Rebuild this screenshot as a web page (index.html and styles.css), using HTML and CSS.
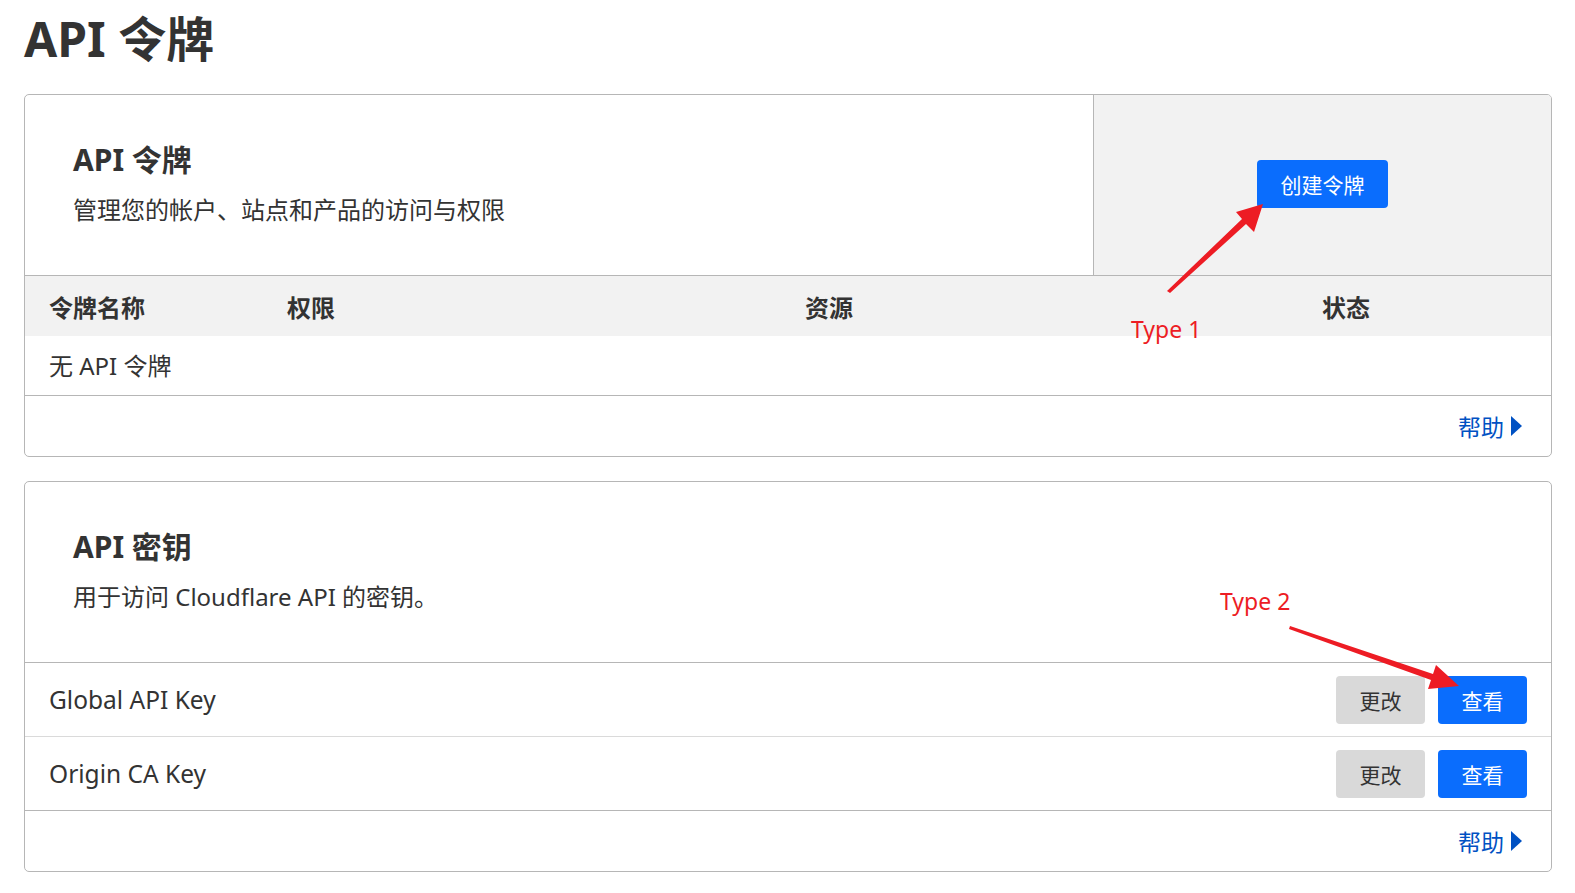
FILE: index.html
```html
<!DOCTYPE html>
<html lang="zh-CN">
    <head>
        <meta charset="UTF-8">
        <meta name="viewport" content="width=device-width, initial-scale=1.0">
        <title>API 令牌</title>
        <link rel="stylesheet" href="styles.css">
    </head>
    <body>
        <div class="page">

            <h1 class="page-title">API 令牌</h1>

            <!-- tokens -->
            <div class="card">
                <div class="card-top">
                    <div class="card-intro">
                        <p class="card-title">API 令牌</p>
                        <p class="card-desc">管理您的帐户、站点和产品的访问与权限</p>
                    </div>
                    <div class="card-side">
                        <button class="btn btn-blue btn-create">创建令牌</button>
                    </div>
                </div>

                <div class="token-head">
                    <span>令牌名称</span>
                    <span>权限</span>
                    <span>资源</span>
                    <span>状态</span>
                </div>
                <div class="token-empty">无 API 令牌</div>

                <div class="card-foot">
                    <a class="help-link" href="#">帮助
                        <svg class="help-arrow" width="11" height="20" viewBox="0 0 11 20"><polygon points="0,0 11,10 0,20" fill="#0051c3"/></svg>
                    </a>
                </div>
            </div>

            <!-- keys -->
            <div class="card">
                <div class="card-top">
                    <div class="card-intro">
                        <p class="card-title">API 密钥</p>
                        <p class="card-desc">用于访问 Cloudflare API 的密钥。</p>
                    </div>
                </div>

                <div class="key-row">
                    <span class="key-name">Global API Key</span>
                    <div class="key-actions">
                        <button class="btn btn-gray">更改</button>
                        <button class="btn btn-blue">查看</button>
                    </div>
                </div>
                <div class="key-row key-row-last">
                    <span class="key-name">Origin CA Key</span>
                    <div class="key-actions">
                        <button class="btn btn-gray">更改</button>
                        <button class="btn btn-blue">查看</button>
                    </div>
                </div>

                <div class="card-foot">
                    <a class="help-link" href="#">帮助
                        <svg class="help-arrow" width="11" height="20" viewBox="0 0 11 20"><polygon points="0,0 11,10 0,20" fill="#0051c3"/></svg>
                    </a>
                </div>
            </div>

        </div>

        <!-- annotations drawn over the screenshot -->
        <svg class="marks" width="1500" height="800" viewBox="0 0 1500 800">
            <polygon fill="#ed1c24" points="1167,291 1242,219 1236,212 1263,204 1254,232 1246,224 1170,293"/>
            <polygon fill="#ed1c24" points="1290,626 1433,674 1436,665 1459,686 1428,689 1431,680 1289,629"/>
        </svg>
        <span class="mark-label mark-one">Type 1</span>
        <span class="mark-label mark-two">Type 2</span>
    </body>
</html>
```

FILE: styles.css
```css
body
{
    margin: 0;
    background-color: white;
    color: #333333;
    font-family: "Noto Sans", "Noto Sans CJK SC", sans-serif;
    position: relative;
}

.page
{
    padding: 10px 23px 0 24px;
}

.page-title
{
    margin: 0 0 26px 0;
    height: 58px;
    font-size: 48px;
    line-height: 58px;
    font-weight: bold;
    color: #333333;
}

.card
{
    border: 1px solid #b6b6b6;
    border-radius: 5px;
    margin-bottom: 24px;
    overflow: hidden;
}
.card:last-child
{
    margin-bottom: 0;
}

.card-top
{
    display: flex;
    border-bottom: 1px solid #b6b6b6;
    height: 180px;
}

.card-intro
{
    flex: 1;
    padding: 46px 48px 0 48px;
}

.card-title
{
    margin: 0 0 14px 0;
    height: 38px;
    font-size: 30px;
    line-height: 38px;
    font-weight: bold;
}

.card-desc
{
    margin: 0;
    font-size: 24px;
    line-height: 34px;
}

.card-side
{
    width: 457px;
    background-color: #f2f2f2;
    border-left: 1px solid #b6b6b6;
    display: flex;
    align-items: center;
    justify-content: center;
}

.btn
{
    border: none;
    border-radius: 4px;
    font-family: "Noto Sans CJK SC", sans-serif;
    font-size: 21px;
    height: 48px;
    width: 89px;
    padding: 0;
    cursor: pointer;
}
.btn-blue
{
    background-color: #0a6dfd;
    color: white;
}
.btn-gray
{
    background-color: #d9d9d9;
    color: #333333;
}
.btn-create
{
    width: 131px;
    margin-top: -2px;
}

.token-head
{
    display: grid;
    grid-template-columns: 238px 518px 517px 1fr;
    align-items: center;
    height: 60px;
    padding-left: 24px;
    background-color: #f2f2f2;
    font-size: 24px;
    font-weight: bold;
}

.token-empty
{
    height: 59px;
    line-height: 59px;
    padding-left: 24px;
    font-size: 24px;
    border-bottom: 1px solid #b6b6b6;
}

.key-row
{
    display: flex;
    align-items: center;
    justify-content: space-between;
    height: 73px;
    padding: 0 24px;
    border-bottom: 1px solid #dadada;
}
.key-row-last
{
    border-bottom: 1px solid #b6b6b6;
}

.key-name
{
    font-size: 24.5px;
}

.key-actions
{
    display: flex;
    gap: 13px;
}

.card-foot
{
    height: 60px;
    display: flex;
    align-items: center;
    justify-content: flex-end;
    padding-right: 29px;
}

.help-link
{
    color: #0051c3;
    text-decoration: none;
    font-size: 23px;
    display: flex;
    align-items: center;
    gap: 7px;
}

.marks
{
    position: absolute;
    left: 0;
    top: 0;
    pointer-events: none;
}

.mark-label
{
    position: absolute;
    color: #ed1c24;
    font-size: 23px;
    line-height: 28px;
    font-family: "Noto Sans", sans-serif;
}
.mark-one
{
    left: 1131px;
    top: 315px;
}
.mark-two
{
    left: 1220px;
    top: 587px;
}
```
